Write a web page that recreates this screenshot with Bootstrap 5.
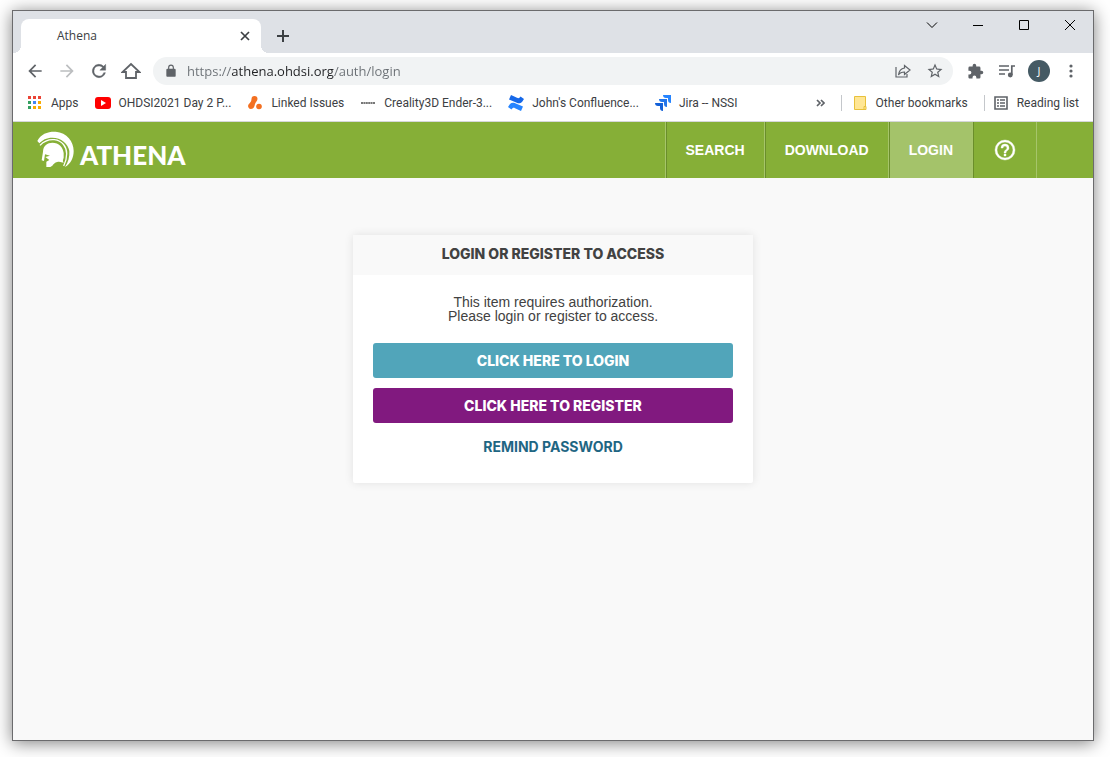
<!DOCTYPE html>
<html lang="en">
<head>
<meta charset="utf-8">
<meta name="viewport" content="width=device-width, initial-scale=1">
<title>Athena</title>
<link href="https://cdn.jsdelivr.net/npm/bootstrap@5.3.0/dist/css/bootstrap.min.css" rel="stylesheet">
<style>
body{background:#fff;padding:10px 16px 16px 12px;font-family:"Open Sans",sans-serif;font-size:12px;color:#3c4043}
button{color:inherit}
.win{border:1px solid #6b6b6d;background:#f9f9f9;box-shadow:0 2px 16px rgba(0,0,0,.5)}
svg{display:block;flex:none}
.strip{background:#dee1e6;height:42px;padding-left:8px}
.tab{width:240px;height:34px;background:#fff;border-radius:8px 8px 0 0;padding:0 8px 0 36px;position:relative}
.tab::before,.tab::after{content:"";position:absolute;bottom:0;width:8px;height:8px}
.tab::before{left:-8px;background:radial-gradient(circle at 0 0,#dee1e6 8px,#fff 8px)}
.tab::after{right:-8px;background:radial-gradient(circle at 100% 0,#dee1e6 8px,#fff 8px)}
.plain{border:0;background:none;padding:0;display:flex;align-items:center;justify-content:center}
.sq16{width:16px;height:16px}
.newtab{width:28px;height:34px;margin-left:8px}
.wbtn{width:46px;height:28px;color:#000}
.tools{background:#fff;height:36px;padding:0 6px}
.tbtn{width:32px;height:28px;color:#5f6368}
.omni{background:#f1f3f4;border-radius:14px;height:28px;margin:0 6px;padding:0 2px 0 11px}
.url{border:0;outline:0;min-width:0;height:28px;padding:0;margin-left:9px;font-size:13px;color:transparent;background:linear-gradient(90deg,#6b7075 45px,#202124 45px,#202124 147px,#6b7075 147px);-webkit-background-clip:text;background-clip:text}
.avatar{width:22px;height:22px;border-radius:50%;background:#455a64;color:#fff;font-size:11px;line-height:22px}
.marks{background:#fff;height:33px;padding:0 14px 4px;border-bottom:1px solid #d5d7da;gap:16px;font-family:Roboto,sans-serif}
.marks a,.marks button{display:flex;align-items:center;gap:8px;color:#3c4043;text-decoration:none;white-space:nowrap}
.vline{width:1px;height:16px;background:#c4c7cb}
.site{background:#86af37;height:56px}
.brand{padding-left:24px;gap:5px;color:#fff;text-decoration:none;font:900 26px/26px Lato,sans-serif}
.brand span{padding-top:10px}
.site nav{border-left:1px solid #a6c56a;margin-right:56px}
.site nav a{display:flex;align-items:center;justify-content:center;padding:0 19px;border-left:1px solid #6a8e2b;border-right:1px solid #a6c56a;color:#fff;text-decoration:none;font:700 14px/20px "Liberation Sans",sans-serif}
.site nav a.on{background:#a4c36a}
.site main,main{padding-top:57px}
.panel{width:400px;max-width:100%;background:#fff;box-shadow:0 0 10px rgba(0,0,0,.1);border-radius:2px;color:#424242}
.panel h1{margin:0;background:#f9f9f9;height:40px;font:800 14px/38px Inter,sans-serif}
.inner{padding:20px 20px 26px}
.panel p{margin:0 0 20px;font:14px/14px "Liberation Sans",sans-serif}
.act{height:35px;border:0;border-radius:3px;padding:0;color:#fff;font:800 14px/35px Inter,sans-serif}
.blue{background:#51a5ba;margin-bottom:10px}
.plum{background:#81197f;margin-bottom:14px}
.remind{color:#1f6683;text-decoration:none;font:700 14px/20px Inter,sans-serif}
</style>
</head>
<body class="d-flex flex-column min-vh-100">
<div class="win flex-grow-1 d-flex flex-column">
  <div class="strip d-flex align-items-end">
    <div class="tab d-flex align-items-center justify-content-between"><span>Athena</span>
      <button class="plain sq16" aria-label="Close tab"><svg width="10" height="10" viewBox="0 0 10 10" stroke="#3c4043" stroke-width="1.700"><path d="M1 1l8 8M9 1l-8 8"/></svg></button></div>
    <button class="plain newtab" aria-label="New tab"><svg width="12" height="12" viewBox="0 0 12 12" stroke="#3c4043" stroke-width="2"><path d="M6 0v12M0 6h12"/></svg></button>
    <div class="d-flex ms-auto align-self-start">
      <button class="plain wbtn" aria-label="Search tabs"><svg width="12" height="12" viewBox="0 0 12 12" fill="none" stroke="currentColor"><path d="M1 3.500l5 5 5-5"/></svg></button>
      <button class="plain wbtn" aria-label="Minimize"><svg width="10" height="10" viewBox="0 0 10 10" fill="none" stroke="currentColor"><path d="M0 5.500h10"/></svg></button>
      <button class="plain wbtn" aria-label="Maximize"><svg width="10" height="10" viewBox="0 0 10 10" fill="none" stroke="currentColor"><path d="M.5.5h9v9h-9z"/></svg></button>
      <button class="plain wbtn" aria-label="Close"><svg width="12" height="12" viewBox="0 0 12 12" fill="none" stroke="currentColor"><path d="M1 1l10 10M11 1L1 11"/></svg></button>
    </div>
  </div>
  <div class="tools d-flex align-items-center">
    <button class="plain tbtn" aria-label="Back"><svg width="20" height="20" viewBox="0 0 24 24" fill="currentColor"><path d="M20 11H7.830l5.590-5.590L12 4l-8 8 8 8 1.410-1.410L7.830 13H20z"/></svg></button>
    <button class="plain tbtn" aria-label="Forward"><svg width="20" height="20" viewBox="0 0 24 24" fill="#bcbec0"><path d="M4 11h12.170l-5.590-5.590L12 4l8 8-8 8-1.410-1.410L16.170 13H4z"/></svg></button>
    <button class="plain tbtn" aria-label="Reload"><svg width="20" height="20" viewBox="0 0 24 24" fill="currentColor" stroke="currentColor" stroke-width=".5"><path d="M17.650 6.350A8 8 0 1 0 19.730 14h-2.080A6 6 0 1 1 12 6c1.660 0 3.140.69 4.220 1.780L13 11h7V4z"/></svg></button>
    <button class="plain tbtn" aria-label="Home"><svg width="20" height="20" viewBox="0 0 20 20" fill="none" stroke="currentColor" stroke-width="1.800"><path d="M1.500 11H5v6h10v-6h3.500L10 3z"/></svg></button>
    <div class="omni flex-grow-1 d-flex align-items-center">
      <svg width="14" height="14" viewBox="0 0 24 24" fill="#5f6368"><path d="M18 8h-1V6A5 5 0 0 0 7 6v2H6a2 2 0 0 0-2 2v10c0 1.100.9 2 2 2h12a2 2 0 0 0 2-2V10a2 2 0 0 0-2-2zM9 6a3 3 0 0 1 6 0v2H9z"/></svg>
      <input class="url flex-grow-1" type="text" aria-label="Address" value="https://athena.ohdsi.org/auth/login">
      <button class="plain tbtn" aria-label="Share"><svg width="16" height="16" viewBox="0 0 16 16" fill="none" stroke="currentColor" stroke-width="1.200"><path d="M1 4v10h11v-3M9.500 5V2.500L15 7l-5.500 4.500V9C7 9 5 9.500 3.500 12 4 8 6 5.500 9.500 5z"/></svg></button>
      <button class="plain tbtn" aria-label="Bookmark this page"><svg width="18" height="18" viewBox="0 0 24 24" fill="currentColor"><path d="M22 9.240l-7.190-.62L12 2 9.190 8.630 2 9.240l5.460 4.730L5.820 21 12 17.270 18.180 21l-1.630-7.030zM12 15.400l-3.760 2.270 1-4.280-3.320-2.880 4.380-.38L12 6.100l1.710 4.040 4.380.38-3.320 2.880 1 4.280z"/></svg></button>
    </div>
    <button class="plain tbtn" aria-label="Extensions"><svg width="17" height="17" viewBox="0 0 24 24" fill="currentColor"><path d="M20.500 11H19V7a2 2 0 0 0-2-2h-4V3.500a2.500 2.500 0 0 0-5 0V5H4a2 2 0 0 0-2 2v3.800h1.500a2.700 2.700 0 0 1 0 5.400H2V20c0 1.100.9 2 2 2h3.800v-1.500a2.700 2.700 0 0 1 5.400 0V22H17a2 2 0 0 0 2-2v-4h1.500a2.500 2.500 0 0 0 0-5z"/></svg></button>
    <button class="plain tbtn" aria-label="Media"><svg width="16" height="14" viewBox="0 0 16 14" fill="none" stroke="currentColor" stroke-width="1.700"><path d="M0 2h10M0 6h10M0 10h6M12.800 11V2H16"/><circle cx="11.300" cy="11" r="1.600" fill="currentColor"/></svg></button>
    <button class="plain tbtn" aria-label="Profile"><span class="avatar">J</span></button>
    <button class="plain tbtn" aria-label="Menu"><svg width="4" height="14" viewBox="0 0 4 14" fill="currentColor"><circle cx="2" cy="2" r="1.600"/><circle cx="2" cy="7" r="1.600"/><circle cx="2" cy="12" r="1.600"/></svg></button>
  </div>
  <div class="marks d-flex align-items-center">
    <a href="#"><svg width="16" height="16" viewBox="0 0 16 16"><path fill="#ea4335" d="M1 1h3v3H1zM6 1h3v3H6zM11 1h3v3h-3z"/><path fill="#34a060" d="M1 6h3v3H1zM1 11h3v3H1z"/><path fill="#4285f4" d="M6 6h3v3H6z"/><path fill="#f9ab00" d="M11 6h3v3h-3zM6 11h3v3H6zM11 11h3v3h-3z"/></svg>Apps</a>
    <a href="#"><svg width="16" height="16" viewBox="0 0 16 16"><rect y="2" width="16" height="12" rx="3" fill="red"/><path fill="#fff" d="M6 5l5 3-5 3z"/></svg>OHDSI2021 Day 2 P...</a>
    <a href="#"><svg width="16" height="16" viewBox="0 0 16 16" fill="#f37021"><path d="M4.500 4a3 3 0 0 1 6 0c0 2-2 3-2.500 5s-1 5-4 5a3 3 0 0 1-2.500-4.500C2.500 8 4.500 7 4.500 4z"/><circle cx="12" cy="11.500" r="2.800"/></svg>Linked Issues</a>
    <a href="#"><svg width="16" height="16" viewBox="0 0 16 16"><path d="M1 8h14" stroke="#777" stroke-width="2" stroke-dasharray="2 .4"/></svg>Creality3D Ender-3...</a>
    <a href="#"><svg width="16" height="16" viewBox="0 0 16 16"><path fill="#2684ff" d="M0 12l2-3c2-2 4-1.500 7 0l6 2.500-2 4.500-6-2.800c-1.500-.7-2.500-.3-3.500 1.300z"/><path fill="#1668e8" d="M16 4l-2 3c-2 2-4 1.500-7 0L1 4.500 3 0l6 2.800c1.500.7 2.500.3 3.500-1.300z"/></svg>John's Confluence...</a>
    <a href="#"><svg width="16" height="16" viewBox="0 0 16 16"><path fill="#2684ff" d="M8 0h8v8a3 3 0 0 1-3-3V3h-2a3 3 0 0 1-3-3z"/><path fill="#2376ea" d="M4 4h8v8a3 3 0 0 1-3-3V7H7a3 3 0 0 1-3-3z"/><path fill="#1260d8" d="M0 8h8v8a3 3 0 0 1-3-3v-2H3a3 3 0 0 1-3-3z"/></svg>Jira -- NSSI</a>
    <button class="plain ms-auto" aria-label="More bookmarks"><svg width="9" height="8" viewBox="0 0 9 8" fill="none" stroke="#5f6368" stroke-width="1.700"><path d="M1 1l3 3-3 3M5 1l3 3-3 3"/></svg></button>
    <div class="d-flex align-items-center gap-2"><span class="vline"></span>
    <a href="#"><svg class="ms-1" width="14" height="16" viewBox="0 0 14 16"><path fill="#ffe694" stroke="#e8c13c" d="M.5 1.500h11v13H.5z"/><path fill="#ffe694" stroke="#e8c13c" d="M10 11.500h2v3h-2z"/></svg>Other bookmarks</a></div>
    <div class="d-flex align-items-center gap-2"><span class="vline"></span>
    <a href="#"><svg width="16" height="16" viewBox="0 0 16 16"><path fill="none" stroke="#5f6368" stroke-width="1.600" d="M2 2h12v12H2z"/><path stroke="#5f6368" stroke-width="1.500" d="M4 5h2M7 5h5M4 8h2M7 8h5M4 11h2M7 11h5"/></svg>Reading list</a></div>
  </div>
  <header class="site d-flex">
    <a class="brand d-flex align-items-center" href="#"><svg width="38" height="38" viewBox="0 0 114 114" fill="#fff"><path d="M1 30C11 8 34 1 56 2c34 2 54 30 54 58 0 20-8 38-26 48 10-14 14-30 13-48C94 38 72 20 46 20 28 20 16 27 7 37z"/><path fill="none" stroke="#fff" stroke-width="4" d="M9 43c14-15 31-18 43-17 24 3 37 22 37 42 0 16-4 27-9 37"/><path d="M18 62c0-18 14-27 28-27 20 0 32 13 34 31v14c-2 6-4 10 0 15l-14-3c-8 0-12 2-20 12l-6 4H28V92l9-5-12-9 14-4-15-4-3 20-7-2z"/></svg><span>ATHENA</span></a>
    <nav class="d-flex ms-auto" aria-label="Main"><a href="#">SEARCH</a><a href="#">DOWNLOAD</a><a class="on" href="#">LOGIN</a>
      <a href="#" aria-label="Help"><svg width="24" height="24" viewBox="0 0 24 24" fill="#fff" stroke="#fff" stroke-width=".4"><path d="M11 18h2v-2h-2zm1-16a10 10 0 1 0 0 20 10 10 0 0 0 0-20zm0 18a8 8 0 1 1 0-16 8 8 0 0 1 0 16zm0-14a4 4 0 0 0-4 4h2a2 2 0 1 1 4 0c0 2-3 1.750-3 5h2c0-2.250 3-2.500 3-5a4 4 0 0 0-4-4z"/></svg></a></nav>
  </header>
  <main class="flex-grow-1 d-flex justify-content-center align-items-start">
    <section class="panel text-center">
      <h1>LOGIN OR REGISTER TO ACCESS</h1>
      <div class="inner d-flex flex-column">
        <p>This item requires authorization.<br>Please login or register to access.</p>
        <button class="act blue">CLICK HERE TO LOGIN</button>
        <button class="act plum">CLICK HERE TO REGISTER</button>
        <a class="remind align-self-center" href="#">REMIND PASSWORD</a>
      </div>
    </section>
  </main>
</div>
<script src="https://cdn.jsdelivr.net/npm/bootstrap@5.3.0/dist/js/bootstrap.bundle.min.js"></script>
</body>
</html>
